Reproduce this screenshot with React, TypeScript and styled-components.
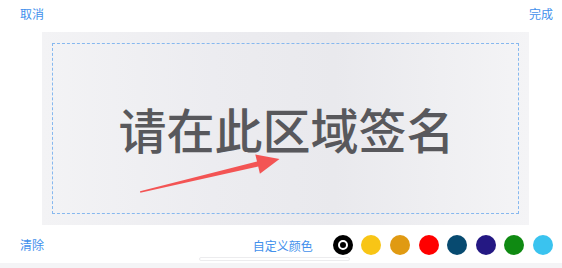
import styled, { createGlobalStyle } from "styled-components";

const GlobalStyle = createGlobalStyle`
    html, body {
        margin: 0;
        padding: 0;
        background: #ffffff;
        font-family: "Noto Sans CJK SC", "Noto Sans", sans-serif;
    }
`;

const Page = styled.div`
    width: 562px;
    height: 268px;
    display: flex;
    flex-direction: column;
    overflow: hidden;
`;

const Bar = styled.div`
    display: flex;
    align-items: center;
    justify-content: space-between;
    height: 28px;
    padding: 0 9px 0 20px;
`;

const LinkText = styled.span`
    font-size: 12px;
    line-height: 1;
    color: #4290ec;
`;

const Board = styled.div`
    position: relative;
    margin: 4px 33px 0 42px;
    height: 193px;
    box-sizing: border-box;
    padding: 11px 10px 11px 10px;
    background: linear-gradient(90deg, #f3f3f5 0%, #ececf0 35%, #e9e9ed 60%, #f4f4f6 100%);
`;

const DashedArea = styled.div`
    height: 100%;
    box-sizing: border-box;
    border: 1px dashed #86b8ef;
    display: flex;
    align-items: center;
    justify-content: center;
`;

const Hint = styled.span`
    font-size: 48px;
    font-weight: 500;
    line-height: 1;
    color: #58585c;
    margin: -2px 0 0 2px;
`;

const Arrow = styled.svg`
    position: absolute;
    left: 0;
    top: 0;
    width: 100%;
    height: 100%;
    pointer-events: none;
`;

const Footer = styled.div`
    display: flex;
    align-items: center;
    justify-content: space-between;
    height: 20px;
    margin-top: 10px;
    padding: 0 9px 0 20px;
`;

const Palette = styled.div`
    display: flex;
    align-items: center;
`;

const CustomLabel = styled(LinkText)`
    margin-right: 20px;
    margin-top: 2px;
`;

const Swatch = styled.div<{ $color: string; $selected?: boolean }>`
    width: 20px;
    height: 20px;
    border-radius: 50%;
    background: ${props => props.$color};
    margin-left: ${props => props.$selected ? "0" : "8.6px"};
    display: flex;
    align-items: center;
    justify-content: center;
`;

const Ring = styled.div`
    width: 6px;
    height: 6px;
    border-radius: 50%;
    border: 2px solid #ffffff;
    display: flex;
    align-items: center;
    justify-content: center;
`;

const Dot = styled.div`
    width: 4px;
    height: 4px;
    border-radius: 50%;
    background: #000000;
`;

const Track = styled.div`
    width: 149px;
    height: 2px;
    margin: 2px 0 0 199px;
    border: 1px solid #ececee;
    border-radius: 2px;
`;

const Strip = styled.div`
    margin-top: 2px;
    flex: 1;
    background: #f4f4f6;
`;

const colors = ["#f8c516", "#e09a12", "#ff0000", "#074a70", "#241883", "#0f8a12", "#3ac3ef"];

export default function App() {
    return (
        <Page>
            <GlobalStyle />
            <Bar>
                <LinkText>取消</LinkText>
                <LinkText>完成</LinkText>
            </Bar>
            <Board>
                <DashedArea>
                    <Hint>请在此区域签名</Hint>
                </DashedArea>
                <Arrow viewBox="0 0 487 193">
                    <polygon
                        fill="#f35454"
                        points="98,159.3 215,129.6 213.3,122.4 237.5,127 217.9,141.8 216.2,134.6 98.3,160.7"
                    />
                </Arrow>
            </Board>
            <Footer>
                <LinkText>清除</LinkText>
                <Palette>
                    <CustomLabel>自定义颜色</CustomLabel>
                    <Swatch $color="#000000" $selected>
                        <Ring>
                            <Dot />
                        </Ring>
                    </Swatch>
                    {colors.map(c => (
                        <Swatch key={c} $color={c} />
                    ))}
                </Palette>
            </Footer>
            <Track />
            <Strip />
        </Page>
    );
}
